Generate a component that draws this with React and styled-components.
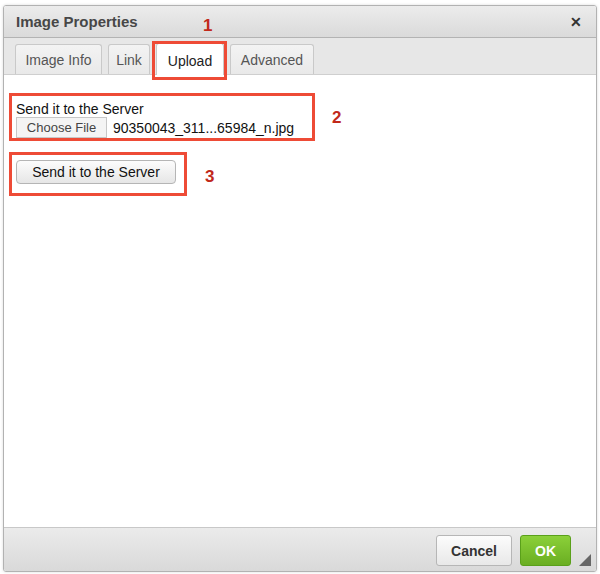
import React from "react";
import styled, { createGlobalStyle } from "styled-components";

const Global = createGlobalStyle`
  html, body { margin: 0; padding: 0; background: #fff; }
  body { font-family: "Liberation Sans", Arial, sans-serif; }
`;

const Page = styled.div`
  width: 600px;
  height: 574px;
  padding: 5px 3px 2px 3px;
  box-sizing: border-box;
  position: relative;
`;

const Dialog = styled.div`
  height: 100%;
  box-sizing: border-box;
  border: 1px solid #b2b2b2;
  border-radius: 3px;
  display: flex;
  flex-direction: column;
  overflow: hidden;
  box-shadow: 0 0 3px rgba(0,0,0,0.15);
`;

const TitleBar = styled.div`
  height: 31px;
  flex: none;
  display: flex;
  align-items: center;
  justify-content: space-between;
  padding: 0 12px;
  background: linear-gradient(#ececec, #dadada);
  border-bottom: 1px solid #b3b3b3;
  font-weight: bold;
  font-size: 15px;
  color: #474747;
`;

const Close = styled.span`
  font-size: 14px;
  font-weight: bold;
  color: #333;
  margin-right: 2px;
`;

const TabBar = styled.div`
  height: 37px;
  flex: none;
  box-sizing: border-box;
  background: #e7e7e7;
  border-bottom: 1px solid #cfcfcf;
  display: flex;
  align-items: flex-end;
  padding-left: 11px;
  gap: 6px;
`;

const Tab = styled.div`
  width: ${p => p.$w}px;
  height: ${p => (p.$active ? "32px" : "30px")};
  box-sizing: border-box;
  display: flex;
  align-items: center;
  justify-content: center;
  font-size: 14px;
  color: ${p => (p.$active ? "#222" : "#555")};
  background: ${p => (p.$active ? "#fff" : "linear-gradient(#f3f3f3, #e9e9e9)")};
  border: 1px solid #c9c9c9;
  border-bottom: none;
  border-radius: 3px 3px 0 0;
  margin-bottom: ${p => (p.$active ? "-1px" : "0")};
  padding-top: ${p => (p.$active ? "2px" : "0")};
`;

const Content = styled.div`
  flex: 1;
  background: #fff;
  padding: 26px 12px 0 12px;
  font-size: 14px;
  color: #111;
`;

const Label = styled.div`
  line-height: 16px;
`;

const FileRow = styled.div`
  display: flex;
  align-items: center;
  gap: 6px;
  margin-top: 0;
`;

const FileButton = styled.div`
  width: 91px;
  height: 21px;
  box-sizing: border-box;
  border: 1px solid #c7c7c7;
  background: #f4f4f4;
  font-size: 13px;
  color: #444;
  display: flex;
  align-items: center;
  justify-content: center;
`;

const FileName = styled.span`
  font-size: 14px;
  color: #111;
`;

const SendButton = styled.div`
  margin-top: 22px;
  width: 160px;
  height: 24px;
  box-sizing: border-box;
  border: 1px solid #b5b5b5;
  border-radius: 4px;
  background: linear-gradient(#fcfcfc, #e6e6e6);
  display: flex;
  align-items: center;
  justify-content: center;
  font-size: 14px;
  color: #111;
`;

const Footer = styled.div`
  height: 44px;
  flex: none;
  box-sizing: border-box;
  border-top: 1px solid #c8c8c8;
  background: linear-gradient(#ebebeb, #d9d9d9);
  display: flex;
  justify-content: flex-end;
  align-items: center;
  padding-right: 25px;
  gap: 8px;
  position: relative;
`;

const Btn = styled.div`
  width: ${p => p.$w}px;
  height: 31px;
  box-sizing: border-box;
  border-radius: 3px;
  border: 1px solid ${p => (p.$primary ? "#5aa01a" : "#b6b6b6")};
  background: ${p => (p.$primary ? "linear-gradient(#8bd039, #6aae22)" : "linear-gradient(#fcfcfc, #e8e8e8)")};
  color: ${p => (p.$primary ? "#fff" : "#333")};
  font-weight: bold;
  font-size: 14px;
  display: flex;
  align-items: center;
  justify-content: center;
  margin-top: 2px;
`;

const Resize = styled.svg`
  position: absolute;
  right: 5px;
  bottom: 5px;
`;

const Box = styled.div`
  position: absolute;
  border: 3px solid #ee4b36;
  box-sizing: border-box;
  pointer-events: none;
`;

const Num = styled.span`
  position: absolute;
  color: #c1281a;
  font-weight: bold;
  font-size: 17px;
  font-family: "Liberation Sans", Arial, sans-serif;
`;

export default function App() {
  return (
    <>
      <Global />
      <Page>
        <Dialog>
          <TitleBar>
            <span>Image Properties</span>
            <Close>✕</Close>
          </TitleBar>
          <TabBar>
            <Tab $w={87}>Image Info</Tab>
            <Tab $w={42}>Link</Tab>
            <Tab $w={68} $active>Upload</Tab>
            <Tab $w={84}>Advanced</Tab>
          </TabBar>
          <Content>
            <Label>Send it to the Server</Label>
            <FileRow>
              <FileButton>Choose File</FileButton>
              <FileName>90350043_311...65984_n.jpg</FileName>
            </FileRow>
            <SendButton>Send it to the Server</SendButton>
          </Content>
          <Footer>
            <Btn $w={76}>Cancel</Btn>
            <Btn $w={51} $primary>OK</Btn>
            <Resize width="12" height="12" viewBox="0 0 12 12">
              <polygon points="12,0 12,12 0,12" fill="#666" />
            </Resize>
          </Footer>
        </Dialog>
        <Box style={{ left: 152, top: 41, width: 75, height: 39 }} />
        <Num style={{ left: 203, top: 16 }}>1</Num>
        <Box style={{ left: 9, top: 93, width: 306, height: 48 }} />
        <Num style={{ left: 332, top: 108 }}>2</Num>
        <Box style={{ left: 9, top: 152, width: 178, height: 44 }} />
        <Num style={{ left: 205, top: 167 }}>3</Num>
      </Page>
    </>
  );
}
